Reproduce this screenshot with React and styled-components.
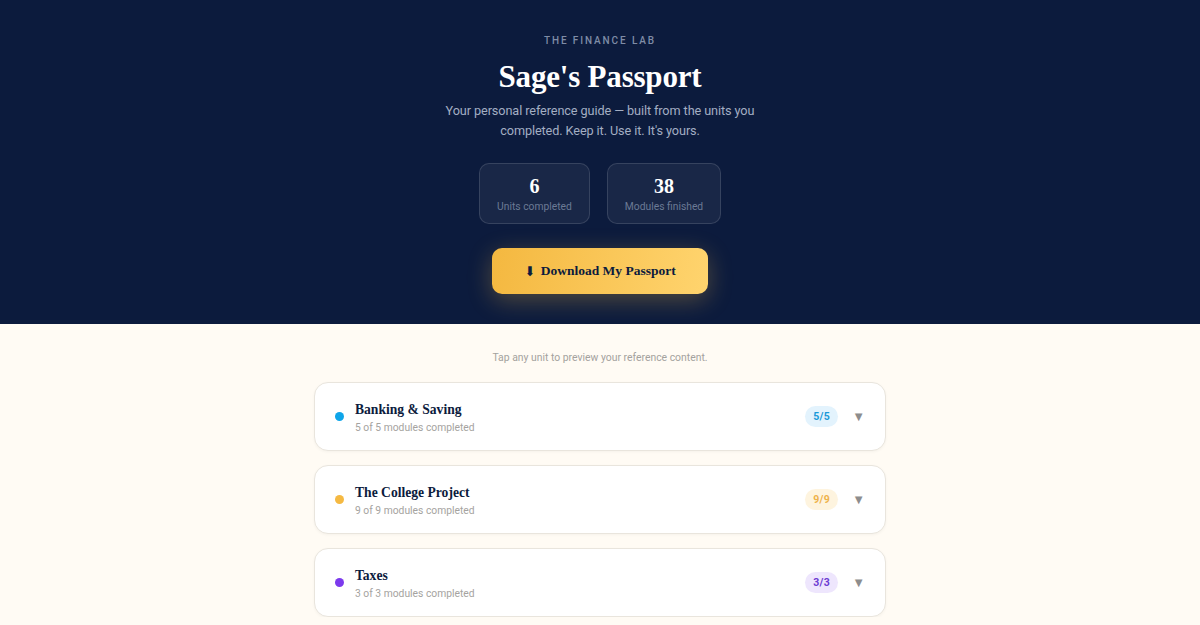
import React from "react";
import styled, { createGlobalStyle } from "styled-components";

const Global = createGlobalStyle`
  html, body { margin: 0; padding: 0; }
  body { background: #fffbf4; font-family: Roboto, "Noto Sans", sans-serif; -webkit-font-smoothing: antialiased; }
  * { box-sizing: border-box; }
`;

const serif = `"Liberation Serif", "DejaVu Serif", serif`;

const Hero = styled.header`
  background: #0c1b3d;
  height: 324px;
  display: flex;
  flex-direction: column;
  align-items: center;
  padding-top: 34px;
`;

const Eyebrow = styled.div`
  font-size: 10px;
  font-weight: 500;
  letter-spacing: 1.9px;
  color: #7f8ca6;
  line-height: 14px;
`;

const Title = styled.h1`
  margin: 9px 0 0;
  font-family: ${serif};
  font-weight: 700;
  font-size: 31px;
  line-height: 40px;
  color: #ffffff;
  letter-spacing: -0.2px;
`;

const Lead = styled.p`
  margin: 4px 0 0;
  max-width: 312px;
  text-align: center;
  font-size: 12.7px;
  letter-spacing: -0.1px;
  line-height: 20px;
  color: #a3aec3;
`;

const Stats = styled.div`
  display: flex;
  gap: 17px;
  margin-top: 22px;
`;

const Stat = styled.div`
  width: ${(p) => p.$w}px;
  height: 61px;
  border-radius: 10px;
  background: rgba(255, 255, 255, 0.055);
  border: 1px solid rgba(255, 255, 255, 0.13);
  display: flex;
  flex-direction: column;
  align-items: center;
  justify-content: center;
  gap: 2px;
`;

const StatNum = styled.div`
  font-family: ${serif};
  font-weight: 700;
  font-size: 20px;
  line-height: 24px;
  color: #ffffff;
`;

const StatLabel = styled.div`
  font-size: 10.3px;
  line-height: 14px;
  color: #6b7a95;
`;

const DownloadButton = styled.button`
  margin-top: 24px;
  width: 216px;
  height: 46px;
  border: none;
  border-radius: 10px;
  background: linear-gradient(100deg, #f4b840 0%, #ffd46e 100%);
  box-shadow: 0 6px 24px rgba(245, 185, 66, 0.3);
  font-family: ${serif};
  font-weight: 700;
  font-size: 13.5px;
  color: #0c1b3d;
  cursor: pointer;
  display: flex;
  align-items: center;
  justify-content: center;
  gap: 5px;
`;

const Main = styled.main`
  display: flex;
  flex-direction: column;
  align-items: center;
  padding-top: 27px;
`;

const Hint = styled.div`
  font-size: 10.4px;
  line-height: 14px;
  color: #a4a29e;
`;

const List = styled.div`
  margin-top: 17px;
  width: 572px;
  display: flex;
  flex-direction: column;
  gap: 14px;
`;

const Card = styled.div`
  height: 69px;
  background: #ffffff;
  border: 1px solid #e9e5dd;
  border-radius: 14px;
  box-shadow: 0 1px 3px rgba(0, 0, 0, 0.04);
  display: flex;
  align-items: center;
  padding: 0 20px 0 20px;
`;

const Dot = styled.span`
  width: 9px;
  height: 9px;
  border-radius: 50%;
  background: ${(p) => p.$c};
  flex-shrink: 0;
`;

const Info = styled.div`
  margin-left: 11px;
  flex: 1;
  display: flex;
  flex-direction: column;
  gap: 2px;
  padding-top: 3px;
`;

const CardTitle = styled.div`
  font-family: ${serif};
  font-weight: 700;
  font-size: 13.6px;
  line-height: 18px;
  color: #0c1b3d;
`;

const CardSub = styled.div`
  font-size: 10.3px;
  line-height: 14px;
  color: #a5a3a0;
`;

const Badge = styled.span`
  height: 21px;
  padding: 0 8px;
  border-radius: 999px;
  background: ${(p) => p.$bg};
  color: ${(p) => p.$fg};
  font-size: 10.5px;
  font-weight: 700;
  display: inline-flex;
  align-items: center;
  letter-spacing: 0.3px;
`;

const Chevron = styled.span`
  margin-left: 14px;
  font-size: 13px;
  color: #8d8d8d;
  line-height: 1;
`;

const units = [
  { title: "Banking & Saving", done: 5, total: 5, dot: "#0ea5e9", bg: "#e3f3fd", fg: "#1a9ad8" },
  { title: "The College Project", done: 9, total: 9, dot: "#f5b942", bg: "#fef4df", fg: "#eeb24a" },
  { title: "Taxes", done: 3, total: 3, dot: "#7c3aed", bg: "#eee6fd", fg: "#6c3bd2" },
];

export default function App() {
  return (
    <>
      <Global />
      <Hero>
        <Eyebrow>THE FINANCE LAB</Eyebrow>
        <Title>Sage's Passport</Title>
        <Lead>Your personal reference guide — built from the units you completed. Keep it. Use it. It's yours.</Lead>
        <Stats>
          <Stat $w={111}>
            <StatNum>6</StatNum>
            <StatLabel>Units completed</StatLabel>
          </Stat>
          <Stat $w={114}>
            <StatNum>38</StatNum>
            <StatLabel>Modules finished</StatLabel>
          </Stat>
        </Stats>
        <DownloadButton>
          <span>⬇</span>
          <span>Download My Passport</span>
        </DownloadButton>
      </Hero>
      <Main>
        <Hint>Tap any unit to preview your reference content.</Hint>
        <List>
          {units.map((u) => (
            <Card key={u.title}>
              <Dot $c={u.dot} />
              <Info>
                <CardTitle>{u.title}</CardTitle>
                <CardSub>{u.done} of {u.total} modules completed</CardSub>
              </Info>
              <Badge $bg={u.bg} $fg={u.fg}>{u.done}/{u.total}</Badge>
              <Chevron>▼</Chevron>
            </Card>
          ))}
        </List>
      </Main>
    </>
  );
}
